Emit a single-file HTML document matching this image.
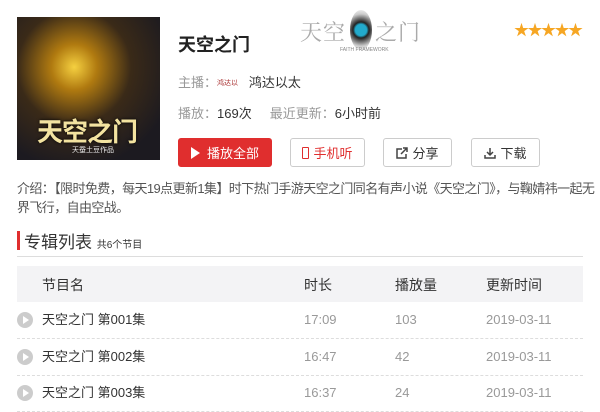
<!DOCTYPE html>
<html><head><meta charset="utf-8"><style>
*{margin:0;padding:0;box-sizing:border-box}
body{width:600px;height:411px;overflow:hidden;background:#fff;font-family:"Liberation Sans","Noto Sans CJK SC",sans-serif;position:relative;color:#333}
.a{position:absolute;white-space:nowrap}
.cover{left:17px;top:17px;width:143px;height:143px;background:radial-gradient(circle at 40% 35%,#f5d040 0,#b07a10 18%,#3a2a18 45%,#1c1a20 80%);overflow:hidden}
.btn{position:absolute;top:138px;height:29px;border:1px solid #ccc;border-radius:3px;font-size:13px;display:flex;align-items:center;justify-content:center;gap:4px;color:#333}
.g{color:#999}
.row{position:absolute;left:17px;width:566px;height:37px;border-bottom:1px dashed #ddd;font-size:13px}
.row span{position:absolute;top:10px;line-height:16px}
.pi{position:absolute;left:0;top:10px;width:16px;height:16px;border-radius:50%;background:#ccc}
.pi:after{content:"";position:absolute;left:6px;top:4px;border-left:6px solid #fff;border-top:4px solid transparent;border-bottom:4px solid transparent}
</style></head><body>
<div class="a cover">
<div class="a" style="left:20px;top:95px;font-size:26px;font-weight:bold;color:#f3e3a0;letter-spacing:-1px;text-shadow:0 0 3px #000">天空之门</div>
<div class="a" style="left:55px;top:128px;font-size:7px;color:#eee">天蚕土豆作品</div>
</div>
<div class="a" style="left:178px;top:31px;font-size:18px;font-weight:bold;color:#222">天空之门</div>
<div class="a" style="left:300px;top:16px;font-size:22px;color:#aaa;letter-spacing:1px;font-family:'Liberation Serif','Noto Serif CJK SC',serif">天空</div>
<div class="a" style="left:350px;top:10px;width:22px;height:40px;border-radius:50%;background:radial-gradient(circle,#2ac 0,#2ac 25%,#222 35%,#ccc 70%,#fff 100%)"></div>
<div class="a" style="left:375px;top:16px;font-size:22px;color:#aaa;letter-spacing:1px;font-family:'Liberation Serif','Noto Serif CJK SC',serif">之门</div>
<div class="a" style="left:340px;top:47px;font-size:5px;color:#888">FAITH FRAMEWORK</div>
<div class="a" style="left:514px;top:19px;font-size:15px;color:#f6a623;letter-spacing:-1.5px">★★★★★</div>
<div class="a g" style="left:178px;top:72px;font-size:13px">主播：<span style="font-size:7px;color:#a33;vertical-align:2px">鸿达以</span>&nbsp;&nbsp; <span style="color:#333">鸿达以太</span></div>
<div class="a g" style="left:178px;top:103px;font-size:13px">播放：<span style="color:#333">169次</span>&nbsp;&nbsp;&nbsp;&nbsp;&nbsp;最近更新：<span style="color:#333">6小时前</span></div>
<div class="btn" style="left:178px;width:94px;background:#e02e2e;border-color:#e02e2e;color:#fff"><span style="border-left:9px solid #fff;border-top:6px solid transparent;border-bottom:6px solid transparent;margin-right:3px"></span>播放全部</div>
<div class="btn" style="left:290px;width:75px;color:#e02e2e"><span style="width:7px;height:12px;border:1.5px solid #e02e2e;border-radius:1px"></span>手机听</div>
<div class="btn" style="left:383px;width:69px"><svg width="12" height="12" viewBox="0 0 12 12" fill="none" stroke="#444" stroke-width="1.5"><path d="M6 2H1v9h9V7M7 1h4v4M11 1L5 7"/></svg>分享</div>
<div class="btn" style="left:471px;width:69px"><svg width="12" height="12" viewBox="0 0 12 12" fill="none" stroke="#444" stroke-width="1.5"><path d="M6 1v7M3 5l3 3 3-3M1 8v3h10V8"/></svg>下载</div>
<div class="a" style="left:17px;top:179px;width:580px;font-size:13px;line-height:19px;color:#555;white-space:normal;letter-spacing:-0.6px">介绍：【限时免费，每天19点更新1集】时下热门手游天空之门同名有声小说《天空之门》，与鞠婧祎一起无界飞行，自由空战。</div>
<div class="a" style="left:17px;top:231px;width:3px;height:19px;background:#e02e2e"></div>
<div class="a" style="left:24px;top:228px;font-size:17px;color:#333">专辑列表 <span style="font-size:10px">共6个节目</span></div>
<div class="a" style="left:17px;top:256px;width:566px;height:1px;background:#ddd"></div>
<div class="a" style="left:17px;top:266px;width:566px;height:36px;background:#f3f3f5;font-size:14px;color:#333">
<span class="a" style="left:25px;top:9px">节目名</span><span class="a" style="left:287px;top:9px">时长</span><span class="a" style="left:378px;top:9px">播放量</span><span class="a" style="left:469px;top:9px">更新时间</span></div>
<div class="row" style="top:302px"><i class="pi"></i><span style="left:25px">天空之门 第001集</span><span class="g" style="left:287px">17:09</span><span class="g" style="left:378px">103</span><span class="g" style="left:469px">2019-03-11</span></div>
<div class="row" style="top:339px"><i class="pi"></i><span style="left:25px">天空之门 第002集</span><span class="g" style="left:287px">16:47</span><span class="g" style="left:378px">42</span><span class="g" style="left:469px">2019-03-11</span></div>
<div class="row" style="top:375px"><i class="pi"></i><span style="left:25px">天空之门 第003集</span><span class="g" style="left:287px">16:37</span><span class="g" style="left:378px">24</span><span class="g" style="left:469px">2019-03-11</span></div>
</body></html>
